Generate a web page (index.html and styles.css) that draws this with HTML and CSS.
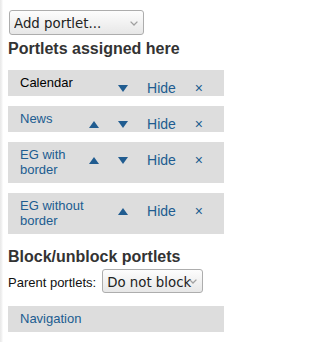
FILE: index.html
```html
<!DOCTYPE html>
<html lang="en">
<head>
<meta charset="utf-8">
<title>Portlets</title>
<link rel="stylesheet" href="styles.css">
</head>
<body>
<div class="manager">
  <div class="sel-wrap sel-add">
    <select class="select select-add"><option>Add portlet...</option></select>
    <svg class="chev" width="8" height="5" viewBox="0 0 8 5"><polyline points="0.6,0.6 4,4 7.4,0.6" fill="none" stroke="#a0a0a0" stroke-width="1.3"/></svg>
  </div>
  <h2 class="title">Portlets assigned here</h2>
  <div class="portlets">
    <div class="portlet">
      <span class="p-name plain">Calendar</span>
      <div class="controls">
        <a class="ctl arrow" href="#"><svg width="10" height="7" viewBox="0 0 10 7"><polygon points="0,0 10,0 5,7" fill="#205c90"/></svg></a>
        <a class="ctl hide" href="#">Hide</a>
        <a class="ctl del" href="#">×</a>
      </div>
    </div>
    <div class="portlet">
      <a class="p-name" href="#">News</a>
      <div class="controls">
        <a class="ctl arrow" href="#"><svg width="10" height="7" viewBox="0 0 10 7"><polygon points="0,7 5,0 10,7" fill="#205c90"/></svg></a>
        <a class="ctl arrow" href="#"><svg width="10" height="7" viewBox="0 0 10 7"><polygon points="0,0 10,0 5,7" fill="#205c90"/></svg></a>
        <a class="ctl hide" href="#">Hide</a>
        <a class="ctl del" href="#">×</a>
      </div>
    </div>
    <div class="portlet">
      <a class="p-name" href="#">EG with border</a>
      <div class="controls">
        <a class="ctl arrow" href="#"><svg width="10" height="7" viewBox="0 0 10 7"><polygon points="0,7 5,0 10,7" fill="#205c90"/></svg></a>
        <a class="ctl arrow" href="#"><svg width="10" height="7" viewBox="0 0 10 7"><polygon points="0,0 10,0 5,7" fill="#205c90"/></svg></a>
        <a class="ctl hide" href="#">Hide</a>
        <a class="ctl del" href="#">×</a>
      </div>
    </div>
    <div class="portlet">
      <a class="p-name" href="#">EG without border</a>
      <div class="controls">
        <a class="ctl arrow" href="#"><svg width="10" height="7" viewBox="0 0 10 7"><polygon points="0,7 5,0 10,7" fill="#205c90"/></svg></a>
        <a class="ctl hide" href="#">Hide</a>
        <a class="ctl del" href="#">×</a>
      </div>
    </div>
  </div>
  <h2 class="title title-block">Block/unblock portlets</h2>
  <div class="parent-row">
    <label class="parent-label">Parent portlets:</label>
    <div class="sel-wrap sel-block">
      <select class="select select-block"><option>Do not block</option></select>
      <svg class="chev" width="8" height="5" viewBox="0 0 8 5"><polyline points="0.6,0.6 4,4 7.4,0.6" fill="none" stroke="#a0a0a0" stroke-width="1.3"/></svg>
    </div>
  </div>
  <div class="portlet nav">
    <a class="p-name" href="#">Navigation</a>
  </div>
</div>
</body>
</html>
```
FILE: styles.css
```css
html {
  background: linear-gradient(90deg, #e8e8e8 0, #f3f3f3 2px, #ffffff 3px);
  min-height: 100%;
}
body {
  margin: 0;
  font-family: "Liberation Sans", Arial, sans-serif;
  font-size: 13px;
  color: #000;
}
.manager {
  width: 216px;
  padding: 10px 0 0 8px;
}
.sel-wrap {
  position: relative;
  display: inline-block;
}
.sel-add {
  display: block;
  width: 135px;
  margin-left: 1px;
}
.select {
  -webkit-appearance: none;
  appearance: none;
  display: block;
  box-sizing: border-box;
  border: 1px solid #adadad;
  border-radius: 3px;
  background: linear-gradient(#fdfdfd, #e7e7e7);
  font-family: "DejaVu Sans", sans-serif;
  font-size: 13.33px;
  color: #222;
  margin: 0;
  padding: 2px 0 0 4px;
}
.select-add {
  width: 135px;
  height: 25px;
}
.select-block {
  width: 101px;
  height: 24px;
}
.chev {
  position: absolute;
  right: 6px;
  top: 50%;
  margin-top: -2px;
  pointer-events: none;
}
.title {
  font-family: "Liberation Sans", Arial, sans-serif;
  font-weight: bold;
  font-size: 16px;
  line-height: 18px;
  color: #333;
  margin: 4.5px 0 0;
}
.portlets {
  display: flex;
  flex-direction: column;
  gap: 10px;
  margin-top: 12.5px;
}
.portlet {
  display: flex;
  align-items: flex-start;
  background: #dddddd;
}
.p-name {
  flex: 1;
  min-width: 0;
  padding: 5px 0 6px 12px;
  line-height: 15px;
  font-size: 13px;
  color: #205c90;
  text-decoration: none;
}
.p-name.plain {
  color: #000;
}
.controls {
  flex: none;
  display: flex;
  align-items: flex-start;
  gap: 19px;
  padding: 10px 21px 0 0;
}
.ctl {
  color: #205c90;
  text-decoration: none;
  font-size: 14px;
  line-height: 16px;
}
.arrow svg {
  display: block;
  margin-top: 5px;
}
.title-block {
  margin-top: 13.5px;
}
.parent-row {
  display: flex;
  align-items: baseline;
  gap: 6px;
  margin-top: 3.5px;
}
.parent-label {
  font-size: 13px;
  color: #111;
}
.nav {
  margin-top: 13px;
}
```
